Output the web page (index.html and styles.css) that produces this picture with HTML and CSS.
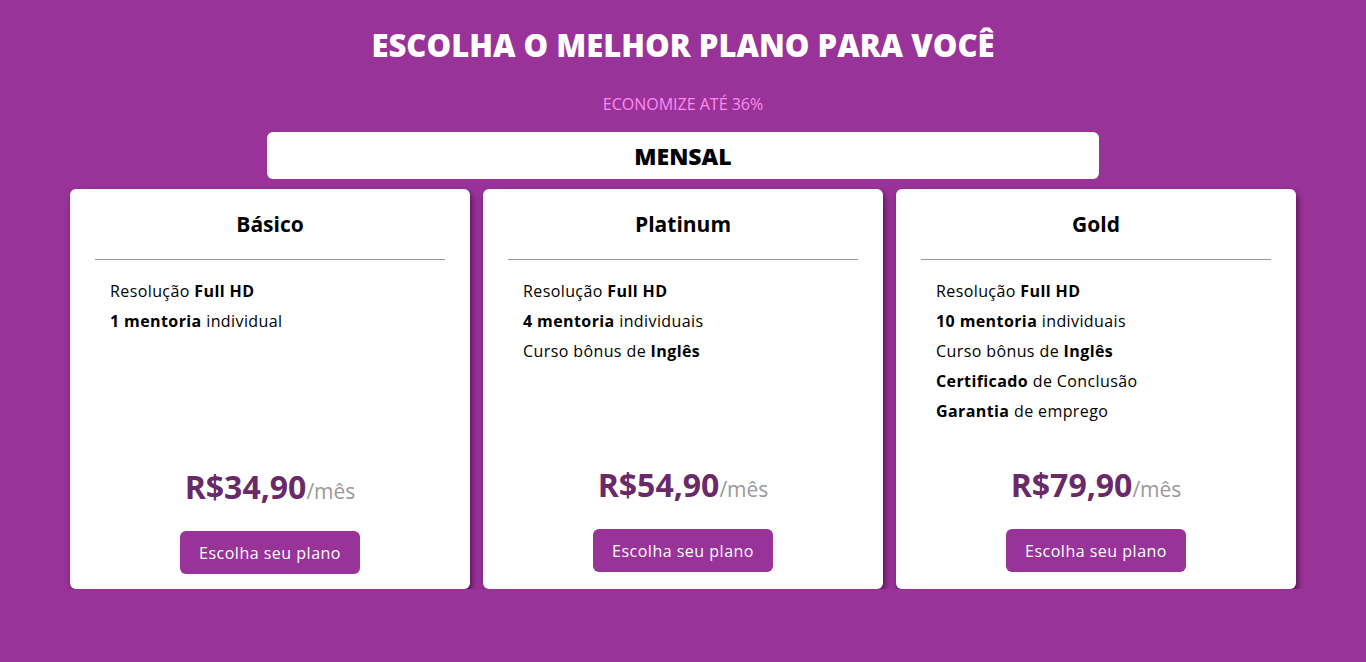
FILE: index.html
```html
<!DOCTYPE html>
<html lang="pt-BR">
<head>
<meta charset="utf-8">
<title>Planos</title>
<link rel="stylesheet" href="styles.css">
</head>
<body>
<main class="page">
  <h1 class="title">ESCOLHA O MELHOR PLANO PARA VOCÊ</h1>
  <p class="save">ECONOMIZE ATÉ 36%</p>
  <div class="period">MENSAL</div>
  <section class="cards">
    <article class="card">
      <h2 class="card-title">Básico</h2>
      <hr class="divider">
      <ul class="features">
        <li>Resolução <b>Full HD</b></li>
        <li><b>1 mentoria</b> individual</li>
      </ul>
      <p class="price price-low"><span class="amount">R$34,90</span><span class="per">/mês</span></p>
      <button class="btn">Escolha seu plano</button>
    </article>
    <article class="card">
      <h2 class="card-title">Platinum</h2>
      <hr class="divider">
      <ul class="features">
        <li>Resolução <b>Full HD</b></li>
        <li><b>4 mentoria</b> individuais</li>
        <li>Curso bônus de <b>Inglês</b></li>
      </ul>
      <p class="price"><span class="amount">R$54,90</span><span class="per">/mês</span></p>
      <button class="btn">Escolha seu plano</button>
    </article>
    <article class="card">
      <h2 class="card-title">Gold</h2>
      <hr class="divider">
      <ul class="features">
        <li>Resolução <b>Full HD</b></li>
        <li><b>10 mentoria</b> individuais</li>
        <li>Curso bônus de <b>Inglês</b></li>
        <li><b>Certificado</b> de Conclusão</li>
        <li><b>Garantia</b> de emprego</li>
      </ul>
      <p class="price"><span class="amount">R$79,90</span><span class="per">/mês</span></p>
      <button class="btn">Escolha seu plano</button>
    </article>
  </section>
</main>
</body>
</html>
```
FILE: styles.css
```css
* { box-sizing: border-box; }
html, body {
  margin: 0;
  padding: 0;
  background: #993399;
  font-family: "Open Sans", "Noto Sans", sans-serif;
}
.page {
  display: flex;
  flex-direction: column;
  align-items: center;
  padding-top: 25px;
}
.title {
  margin: 0;
  color: #fff;
  font-size: 31px;
  font-weight: 800;
  line-height: 40px;
  letter-spacing: 0;
}
.save {
  margin: 29px 0 0;
  color: #ff8cf0;
  font-size: 16px;
  line-height: 20px;
}
.period {
  margin-top: 18px;
  width: 832px;
  height: 47px;
  background: #fff;
  border-radius: 6px;
  display: flex;
  align-items: center;
  justify-content: center;
  font-size: 23px;
  font-weight: 800;
  color: #000;
}
.cards {
  margin-top: 10px;
  display: flex;
  gap: 13px;
}
.card {
  width: 400px;
  height: 400px;
  background: #fff;
  border-radius: 6px;
  box-shadow: 2px 4px 6px rgba(40, 0, 40, 0.6);
  display: flex;
  flex-direction: column;
  align-items: center;
  padding: 21px 25px 0;
}
.card-title {
  margin: 0;
  font-size: 21px;
  font-weight: 700;
  line-height: 28px;
  color: #000;
}
.divider {
  align-self: stretch;
  margin: 21px 0 0;
  border: 0;
  border-top: 1px solid #999;
}
.features {
  align-self: stretch;
  list-style: none;
  margin: 16px 0 0;
  padding: 0 0 0 15px;
  height: 169px;
  font-size: 16px;
  letter-spacing: 0.4px;
  color: #000;
}
.features li {
  line-height: 30px;
}
.features b { font-weight: 700; }
.price {
  margin: 20px 0 0;
  line-height: 40px;
}
.price-low { margin-top: 22px; }
.amount {
  font-size: 32px;
  font-weight: 700;
  color: #6a2a6a;
}
.per {
  font-size: 21px;
  color: #999;
}
.btn {
  margin-top: 18px;
  width: 180px;
  height: 43px;
  border: 0;
  border-radius: 6px;
  background: #993399;
  color: #fff;
  font-family: inherit;
  font-size: 16px;
  letter-spacing: 0.5px;
  cursor: pointer;
}
```
